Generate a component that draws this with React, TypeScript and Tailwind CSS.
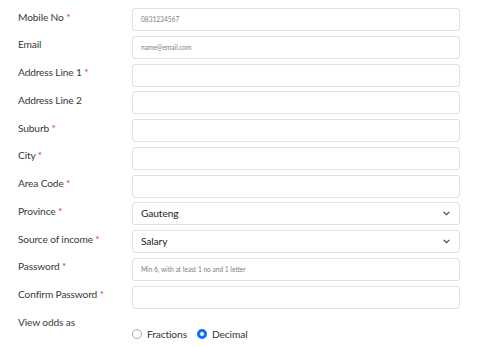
import React from "react";

const Req = () => <span className="text-[#dc3545]"> *</span>;

function Row({ label, req, children }: { label: string; req?: boolean; children: React.ReactNode }) {
  return (
    <div className="flex items-start h-[27.77px]">
      <div className="w-[114px] text-[10.2px] tracking-[-0.15px] leading-[15px] pt-[1.5px] text-[#3a3a3a]">
        {label}
        {req && <Req />}
      </div>
      <div className="flex-1">{children}</div>
    </div>
  );
}

const Input = ({ ph }: { ph?: string }) => (
  <div className="h-[23px] border border-[#dfe1e4] rounded-[3px] bg-white flex items-center pl-[8px] pt-[1px] text-[6.6px] text-[#808080]">
    {ph}
  </div>
);

const Select = ({ value }: { value: string }) => (
  <div className="h-[23px] border border-[#dfe1e4] rounded-[3px] bg-white flex items-center justify-between pl-[8px] pr-[9px] text-[10.2px] tracking-[-0.1px] text-[#222]">
    <span>{value}</span>
    <svg width="7" height="5" viewBox="0 0 7 5" fill="none" stroke="#444" strokeWidth="1.1">
      <path d="M0.6 0.8l2.9 2.9L6.4 0.8" />
    </svg>
  </div>
);

export default function App() {
  return (
    <div
      className="w-[479px] h-[347px] bg-white pl-[18px] pr-[19px] pt-[8px]"
      style={{ fontFamily: 'Lato, sans-serif' }}
    >
      <Row label="Mobile No" req><Input ph="0831234567" /></Row>
      <Row label="Email"><Input ph="name@email.com" /></Row>
      <Row label="Address Line 1" req><Input /></Row>
      <Row label="Address Line 2"><Input /></Row>
      <Row label="Suburb" req><Input /></Row>
      <Row label="City" req><Input /></Row>
      <Row label="Area Code" req><Input /></Row>
      <Row label="Province" req><Select value="Gauteng" /></Row>
      <Row label="Source of income" req><Select value="Salary" /></Row>
      <Row label="Password" req><Input ph="Min 6, with at least 1 no and 1 letter" /></Row>
      <Row label="Confirm Password" req><Input /></Row>
      <div className="text-[10.2px] tracking-[-0.15px] leading-[15px] pt-[1.5px] text-[#3a3a3a]">View odds as</div>
      <div className="flex items-center pl-[114px] -mt-[3px] text-[10.2px] tracking-[-0.1px] text-[#333] leading-[15px]">
        <span className="w-[10px] h-[10px] rounded-full border border-[#aaa] bg-white" />
        <span className="ml-[5px]">Fractions</span>
        <span className="ml-[10px] w-[10px] h-[10px] rounded-full border-[3px] border-[#0d6efd] bg-white" />
        <span className="ml-[5px]">Decimal</span>
      </div>
    </div>
  );
}
